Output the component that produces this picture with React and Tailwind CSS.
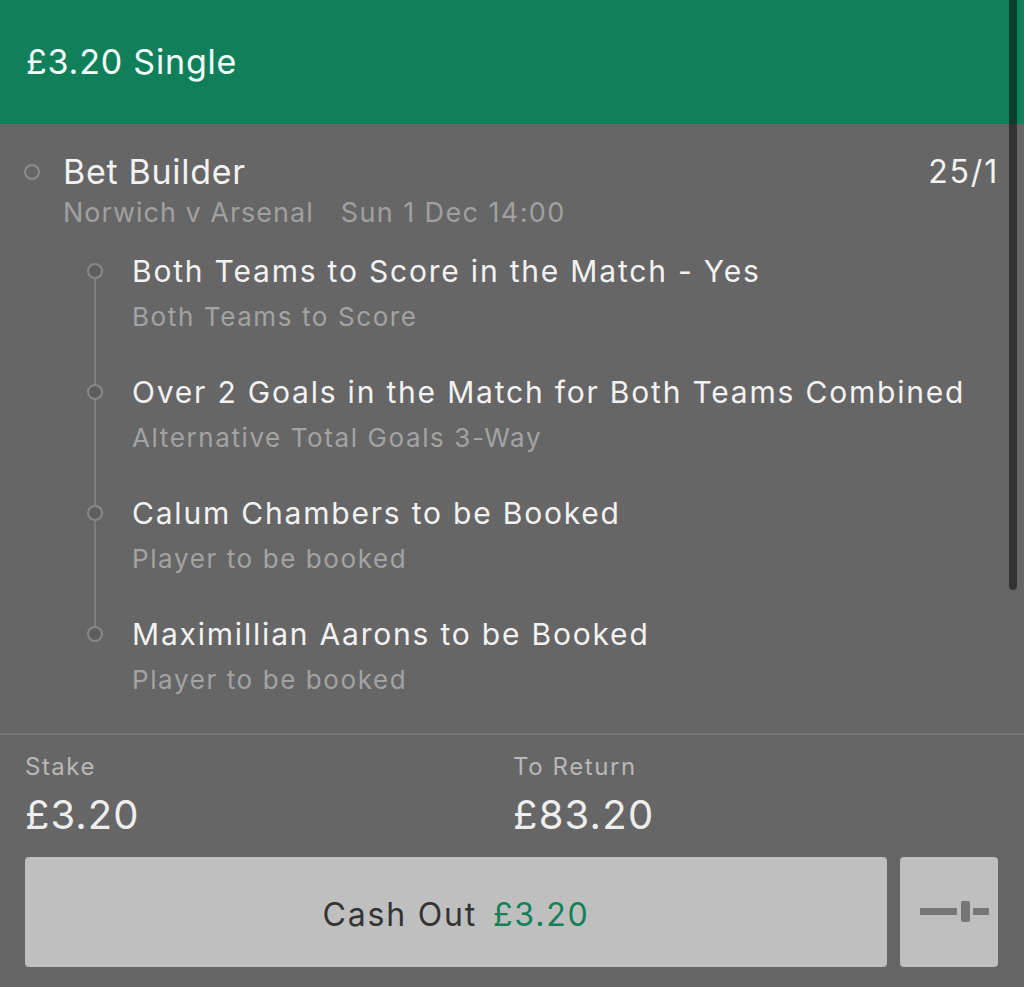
import React from 'react';

const legs = [
  { title: 'Both Teams to Score in the Match - Yes', market: 'Both Teams to Score' },
  { title: 'Over 2 Goals in the Match for Both Teams Combined', market: 'Alternative Total Goals 3-Way' },
  { title: 'Calum Chambers to be Booked', market: 'Player to be booked' },
  { title: 'Maximillian Aarons to be Booked', market: 'Player to be booked' },
];

const SliderIcon = () => (
  <svg width="70" height="22" viewBox="0 0 70 22" fill="#767676">
    <rect x="0" y="7" width="37" height="7" rx="1" />
    <rect x="41" y="0" width="9" height="21" rx="2" />
    <rect x="53" y="7" width="16" height="7" rx="1" />
  </svg>
);

const App = () => {
  return (
    <div className="relative w-[1024px] h-[987px] overflow-hidden bg-[#666666] font-['Inter',sans-serif] text-[#f2f2f2]">
      <header className="h-[124px] bg-[#127f5b] flex items-center px-[26px]">
        <h1 className="text-[34px] leading-none text-[#f4fffa] tracking-[0.8px]">£3.20 Single</h1>
      </header>

      <section className="pt-[28px] pl-[24px] pr-[27px]">
        <div className="flex items-center h-[40px]">
          <span className="w-[16px] h-[16px] rounded-full border-2 border-[#8a8a8a]" />
          <span className="ml-[23px] text-[34px] leading-[40px] flex-1 tracking-[0.7px]">Bet Builder</span>
          <span className="text-[32px] leading-[40px] tracking-[1.8px] -mr-[2px]">25/1</span>
        </div>
        <div className="ml-[39px] mt-[5px] text-[27px] leading-[32px] text-[#a0a0a0] flex gap-[27px]">
          <span className="tracking-[1px]">Norwich v Arsenal</span>
          <span className="tracking-[1.4px]">Sun 1 Dec 14:00</span>
        </div>

        <div className="relative mt-[24px] ml-[63px]">
          <div className="absolute left-[7px] top-[18px] bottom-[57px] w-[2px] bg-[#7e7e7e]" />
          {legs.map((leg, i) => (
            <div key={i} className={`flex ${i < legs.length - 1 ? 'pb-[41px]' : ''}`}>
              <div className="w-[16px] pt-[10px]">
                <div className="relative w-[16px] h-[16px] rounded-full border-2 border-[#888888] bg-[#5e5e5e]" />
              </div>
              <div className="ml-[29px]">
                <div className="text-[30px] leading-[36px] tracking-[1.8px]">{leg.title}</div>
                <div className="mt-[12px] text-[26px] leading-[32px] text-[#a3a3a3] tracking-[1.6px]">{leg.market}</div>
              </div>
            </div>
          ))}
        </div>
      </section>

      <div className="mt-[37px] h-[2px] bg-[#767676]" />

      <footer className="pt-[17px] px-[25px]">
        <div className="flex">
          <div className="w-[488px]">
            <div className="text-[24px] leading-[30px] text-[#b8b8b8] tracking-[1.5px]">Stake</div>
            <div className="mt-[10px] text-[40px] leading-[46px] text-[#eeeeee] tracking-[1px]">£3.20</div>
          </div>
          <div>
            <div className="text-[24px] leading-[30px] text-[#b8b8b8] tracking-[1.6px]">To Return</div>
            <div className="mt-[10px] text-[40px] leading-[46px] text-[#eeeeee] tracking-[1.2px]">£83.20</div>
          </div>
        </div>
        <div className="mt-[19px] flex gap-[13px] pr-[1px]">
          <button className="w-[862px] h-[110px] rounded-[4px] bg-[#bfbfbf] flex items-center justify-center pt-[5px] text-[32px] tracking-[1.8px]">
            <span className="text-[#333333]">Cash Out</span>
            <span className="ml-[16px] text-[#138058]">£3.20</span>
          </button>
          <button className="w-[98px] h-[110px] rounded-[4px] bg-[#bfbfbf] flex items-center pl-[20px]">
            <SliderIcon />
          </button>
        </div>
      </footer>

      <div className="absolute top-0 right-[7px] w-[8px] h-[590px] rounded-b-full bg-black/50" />
    </div>
  );
};

export default App;
